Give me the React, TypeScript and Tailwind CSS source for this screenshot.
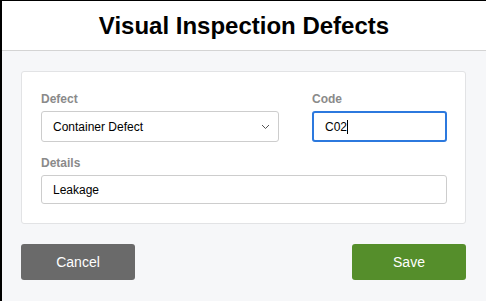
import React from 'react';

const font = { fontFamily: '"Liberation Sans", Arial, sans-serif' };

const Label: React.FC<{ children: React.ReactNode }> = ({ children }) => (
  <div className="h-4 mb-1 text-[12px] leading-4 font-bold text-[#8a8a8a]">{children}</div>
);

const App: React.FC = () => {
  return (
    <div className="w-[486px] h-[301px] flex flex-col bg-[#f6f7f9] border-t border-l-2 border-black" style={font}>
      <div className="h-[50px] shrink-0 bg-white border-b border-[#d4d4d4] flex items-center justify-center">
        <h1 className="text-[24px] font-bold text-black leading-none">Visual Inspection Defects</h1>
      </div>

      <div className="pl-[19px] pr-5 pt-5 flex flex-col">
        <div className="bg-white border border-[#e2e3e5] rounded-[3px] pl-[19px] pr-[18px] pt-[19px] pb-[19px]">
          <div className="flex justify-between">
            <div className="w-[238px]">
              <Label>Defect</Label>
              <div className="h-[31px] border border-[#cdcdcd] rounded-[3px] pl-[11px] pr-[8px] flex items-center justify-between text-[12px] text-black">
                <span>Container Defect</span>
                <svg width="9" height="6" viewBox="0 0 9 6" fill="none">
                  <path d="M1 1l3.5 3.5L8 1" stroke="#555" strokeWidth="1" />
                </svg>
              </div>
            </div>
            <div className="w-[135px]">
              <Label>Code</Label>
              <div className="h-[31px] border-2 border-[#2c79de] rounded-[3px] pl-[11px] flex items-center text-[12px] text-black">
                <span>C02</span>
                <span className="w-px h-[14px] bg-black"></span>
              </div>
            </div>
          </div>

          <div className="mt-[13px]">
            <Label>Details</Label>
            <div className="h-[29px] border border-[#cdcdcd] rounded-[3px] pl-[11px] flex items-center text-[12px] text-black">
              Leakage
            </div>
          </div>
        </div>

        <div className="mt-5 flex justify-between">
          <button className="w-[114px] h-[36px] rounded-[3px] bg-[#6a6a6a] text-white text-[14px]">Cancel</button>
          <button className="w-[114px] h-[36px] rounded-[3px] bg-[#558e2b] text-white text-[14px]">Save</button>
        </div>
      </div>
    </div>
  );
};

export default App;
